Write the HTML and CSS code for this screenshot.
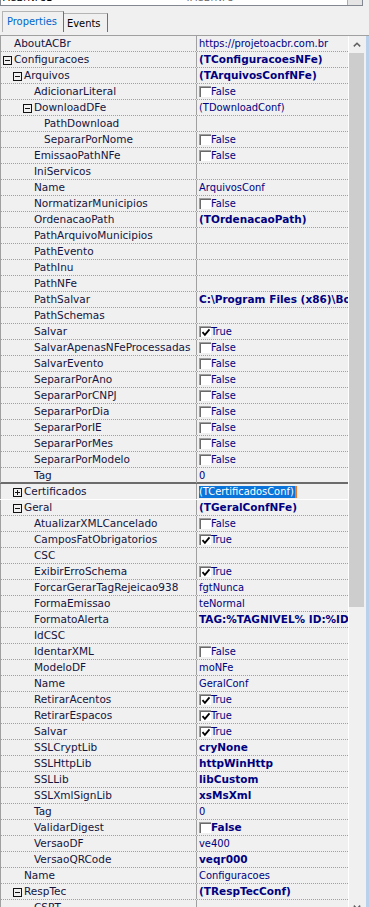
FILE: index.html
```html
<!DOCTYPE html>
<html lang="pt">
<head>
<meta charset="utf-8">
<title>Object Inspector</title>
<link rel="stylesheet" href="styles.css">
</head>
<body>
<div class="combo"><span class="c-name">ACBrNFe1</span><span class="c-type">TACBrNFe</span><span class="c-btn"></span></div>
<div class="tabs">
  <div class="tab active">Properties</div>
  <div class="tab ev">Events</div>
</div>
<div class="insp">
  <div class="grid">
    <div class="row"><div class="name l0"><span class="tw"></span>AboutACBr</div><div class="val">https://projetoacbr.com.br</div></div>
    <div class="row"><div class="name l0"><span class="tw"><svg class="tb" width="9" height="9" viewBox="0 0 9 9"><rect x=".5" y=".5" width="8" height="8" fill="none" stroke="#111"/><path d="M2 4.5h5" stroke="#111"/></svg></span>Configuracoes</div><div class="val b">(TConfiguracoesNFe)</div></div>
    <div class="row"><div class="name l1"><span class="tw"><svg class="tb" width="9" height="9" viewBox="0 0 9 9"><rect x=".5" y=".5" width="8" height="8" fill="none" stroke="#111"/><path d="M2 4.5h5" stroke="#111"/></svg></span>Arquivos</div><div class="val b">(TArquivosConfNFe)</div></div>
    <div class="row"><div class="name l2"><span class="tw"></span>AdicionarLiteral</div><div class="val"><span class="cb"></span>False</div></div>
    <div class="row"><div class="name l2"><span class="tw"><svg class="tb" width="9" height="9" viewBox="0 0 9 9"><rect x=".5" y=".5" width="8" height="8" fill="none" stroke="#111"/><path d="M2 4.5h5" stroke="#111"/></svg></span>DownloadDFe</div><div class="val">(TDownloadConf)</div></div>
    <div class="row"><div class="name l3"><span class="tw"></span>PathDownload</div><div class="val"></div></div>
    <div class="row"><div class="name l3"><span class="tw"></span>SepararPorNome</div><div class="val"><span class="cb"></span>False</div></div>
    <div class="row"><div class="name l2"><span class="tw"></span>EmissaoPathNFe</div><div class="val"><span class="cb"></span>False</div></div>
    <div class="row"><div class="name l2"><span class="tw"></span>IniServicos</div><div class="val"></div></div>
    <div class="row"><div class="name l2"><span class="tw"></span>Name</div><div class="val">ArquivosConf</div></div>
    <div class="row"><div class="name l2"><span class="tw"></span>NormatizarMunicipios</div><div class="val"><span class="cb"></span>False</div></div>
    <div class="row"><div class="name l2"><span class="tw"></span>OrdenacaoPath</div><div class="val b">(TOrdenacaoPath)</div></div>
    <div class="row"><div class="name l2"><span class="tw"></span>PathArquivoMunicipios</div><div class="val"></div></div>
    <div class="row"><div class="name l2"><span class="tw"></span>PathEvento</div><div class="val"></div></div>
    <div class="row"><div class="name l2"><span class="tw"></span>PathInu</div><div class="val"></div></div>
    <div class="row"><div class="name l2"><span class="tw"></span>PathNFe</div><div class="val"></div></div>
    <div class="row"><div class="name l2"><span class="tw"></span>PathSalvar</div><div class="val b">C:\Program Files (x86)\Borland</div></div>
    <div class="row"><div class="name l2"><span class="tw"></span>PathSchemas</div><div class="val"></div></div>
    <div class="row"><div class="name l2"><span class="tw"></span>Salvar</div><div class="val"><span class="cb"><svg width="10" height="9" viewBox="0 0 10 9"><path d="M1.5 4.2l2.4 2.6 4.6-5.4" fill="none" stroke="#000" stroke-width="1.8"/></svg></span>True</div></div>
    <div class="row"><div class="name l2"><span class="tw"></span>SalvarApenasNFeProcessadas</div><div class="val"><span class="cb"></span>False</div></div>
    <div class="row"><div class="name l2"><span class="tw"></span>SalvarEvento</div><div class="val"><span class="cb"></span>False</div></div>
    <div class="row"><div class="name l2"><span class="tw"></span>SepararPorAno</div><div class="val"><span class="cb"></span>False</div></div>
    <div class="row"><div class="name l2"><span class="tw"></span>SepararPorCNPJ</div><div class="val"><span class="cb"></span>False</div></div>
    <div class="row"><div class="name l2"><span class="tw"></span>SepararPorDia</div><div class="val"><span class="cb"></span>False</div></div>
    <div class="row"><div class="name l2"><span class="tw"></span>SepararPorIE</div><div class="val"><span class="cb"></span>False</div></div>
    <div class="row"><div class="name l2"><span class="tw"></span>SepararPorMes</div><div class="val"><span class="cb"></span>False</div></div>
    <div class="row"><div class="name l2"><span class="tw"></span>SepararPorModelo</div><div class="val"><span class="cb"></span>False</div></div>
    <div class="row"><div class="name l2"><span class="tw"></span>Tag</div><div class="val">0</div></div>
    <div class="row sel"><div class="name l1"><span class="tw"><svg class="tb" width="9" height="9" viewBox="0 0 9 9"><rect x=".5" y=".5" width="8" height="8" fill="none" stroke="#111"/><path d="M2 4.5h5M4.5 2v5" stroke="#111"/></svg></span>Certificados</div><div class="val"><span class="hl">(TCertificadosConf)</span></div></div>
    <div class="row"><div class="name l1"><span class="tw"><svg class="tb" width="9" height="9" viewBox="0 0 9 9"><rect x=".5" y=".5" width="8" height="8" fill="none" stroke="#111"/><path d="M2 4.5h5" stroke="#111"/></svg></span>Geral</div><div class="val b">(TGeralConfNFe)</div></div>
    <div class="row"><div class="name l2"><span class="tw"></span>AtualizarXMLCancelado</div><div class="val"><span class="cb"></span>False</div></div>
    <div class="row"><div class="name l2"><span class="tw"></span>CamposFatObrigatorios</div><div class="val"><span class="cb"><svg width="10" height="9" viewBox="0 0 10 9"><path d="M1.5 4.2l2.4 2.6 4.6-5.4" fill="none" stroke="#000" stroke-width="1.8"/></svg></span>True</div></div>
    <div class="row"><div class="name l2"><span class="tw"></span>CSC</div><div class="val"></div></div>
    <div class="row"><div class="name l2"><span class="tw"></span>ExibirErroSchema</div><div class="val"><span class="cb"><svg width="10" height="9" viewBox="0 0 10 9"><path d="M1.5 4.2l2.4 2.6 4.6-5.4" fill="none" stroke="#000" stroke-width="1.8"/></svg></span>True</div></div>
    <div class="row"><div class="name l2"><span class="tw"></span>ForcarGerarTagRejeicao938</div><div class="val">fgtNunca</div></div>
    <div class="row"><div class="name l2"><span class="tw"></span>FormaEmissao</div><div class="val">teNormal</div></div>
    <div class="row"><div class="name l2"><span class="tw"></span>FormatoAlerta</div><div class="val b">TAG:%TAGNIVEL% ID:%ID%</div></div>
    <div class="row"><div class="name l2"><span class="tw"></span>IdCSC</div><div class="val"></div></div>
    <div class="row"><div class="name l2"><span class="tw"></span>IdentarXML</div><div class="val"><span class="cb"></span>False</div></div>
    <div class="row"><div class="name l2"><span class="tw"></span>ModeloDF</div><div class="val">moNFe</div></div>
    <div class="row"><div class="name l2"><span class="tw"></span>Name</div><div class="val">GeralConf</div></div>
    <div class="row"><div class="name l2"><span class="tw"></span>RetirarAcentos</div><div class="val"><span class="cb"><svg width="10" height="9" viewBox="0 0 10 9"><path d="M1.5 4.2l2.4 2.6 4.6-5.4" fill="none" stroke="#000" stroke-width="1.8"/></svg></span>True</div></div>
    <div class="row"><div class="name l2"><span class="tw"></span>RetirarEspacos</div><div class="val"><span class="cb"><svg width="10" height="9" viewBox="0 0 10 9"><path d="M1.5 4.2l2.4 2.6 4.6-5.4" fill="none" stroke="#000" stroke-width="1.8"/></svg></span>True</div></div>
    <div class="row"><div class="name l2"><span class="tw"></span>Salvar</div><div class="val"><span class="cb"><svg width="10" height="9" viewBox="0 0 10 9"><path d="M1.5 4.2l2.4 2.6 4.6-5.4" fill="none" stroke="#000" stroke-width="1.8"/></svg></span>True</div></div>
    <div class="row"><div class="name l2"><span class="tw"></span>SSLCryptLib</div><div class="val b">cryNone</div></div>
    <div class="row"><div class="name l2"><span class="tw"></span>SSLHttpLib</div><div class="val b">httpWinHttp</div></div>
    <div class="row"><div class="name l2"><span class="tw"></span>SSLLib</div><div class="val b">libCustom</div></div>
    <div class="row"><div class="name l2"><span class="tw"></span>SSLXmlSignLib</div><div class="val b">xsMsXml</div></div>
    <div class="row"><div class="name l2"><span class="tw"></span>Tag</div><div class="val">0</div></div>
    <div class="row"><div class="name l2"><span class="tw"></span>ValidarDigest</div><div class="val b"><span class="cb"></span>False</div></div>
    <div class="row"><div class="name l2"><span class="tw"></span>VersaoDF</div><div class="val">ve400</div></div>
    <div class="row"><div class="name l2"><span class="tw"></span>VersaoQRCode</div><div class="val b">veqr000</div></div>
    <div class="row"><div class="name l1"><span class="tw"></span>Name</div><div class="val">Configuracoes</div></div>
    <div class="row"><div class="name l1"><span class="tw"><svg class="tb" width="9" height="9" viewBox="0 0 9 9"><rect x=".5" y=".5" width="8" height="8" fill="none" stroke="#111"/><path d="M2 4.5h5" stroke="#111"/></svg></span>RespTec</div><div class="val b">(TRespTecConf)</div></div>
    <div class="row"><div class="name l2"><span class="tw"></span>CSRT</div><div class="val"></div></div>
  </div>
  <div class="sep"></div>
  <div class="sb">
    <div class="sb-btn"><svg width="8" height="5" viewBox="0 0 8 5"><path d="M.8 4.4L4 1.2l3.2 3.2" fill="none" stroke="#606060" stroke-width="1.5"/></svg></div>
    <div class="sb-thumb"></div>
    <div class="sb-track"></div>
    <div class="sb-btn"><svg width="8" height="5" viewBox="0 0 8 5"><path d="M.8 .6L4 3.8l3.2-3.2" fill="none" stroke="#606060" stroke-width="1.5"/></svg></div>
  </div>
  <div class="gap"></div>
  <div class="edge"></div>
</div>
</body>
</html>
```
FILE: styles.css
```css
* { box-sizing: border-box; }
html, body { height: 907px; overflow: hidden; }
body {
  margin: 0;
  background: #f0f0f0;
  font-family: "DejaVu Sans Condensed", "DejaVu Sans", sans-serif;
  font-size: 11px;
  color: #000;
}

/* top component combo (clipped at the top edge) */
.combo {
  display: flex;
  height: 17px;
  margin: -11px 6px 0 0;
  background: #fff;
  border: 1px solid #828790;
  line-height: 15px;
}
.c-name { width: 184px; padding-left: 2px; color: #000; }
.c-type { flex: 1; color: #6d6d6d; }
.c-btn { width: 15px; background: #e5e5e5; border-left: 1px solid #adadad; }

/* tabs */
.tabs {
  display: flex;
  align-items: flex-end;
  height: 26px;
  padding-left: 2px;
  margin-bottom: 3px;
}
.tab {
  border: 1px solid #b4b4b4;
  border-bottom: none;
  border-right-color: #6f6f6f;
  line-height: 13px;
  padding-top: 3px;
}
.tab.active { width: 62px; height: 21px; padding-left: 4px; color: #0066cc; }
.tab.ev { width: 44px; height: 19px; padding-left: 3px; color: #000; border-left: none; }

/* inspector grid */
.insp {
  display: flex;
  border-top: 1px solid #a0a0a0;
}
.grid { width: 348px; flex: none; }
.row {
  display: flex;
  height: 16px;
  border-bottom: 1px dotted #a0a0a0;
  line-height: 15px;
  white-space: nowrap;
}
.row.sel {
  height: 18px;
  margin-top: -2px;
  border-top: 2px solid #6b6b6b;
  border-bottom: 1px solid #fff;
}
.name {
  width: 197px;
  flex: none;
  display: flex;
  align-items: center;
  border-left: 1px solid #a0a0a0;
  border-right: 1px solid #a0a0a0;
  overflow: hidden;
  font-family: "DejaVu Sans", sans-serif;
  font-size: 10.5px;
  color: #141440;
}
.l0 { padding-left: 2px; }
.l1 { padding-left: 12px; }
.l2 { padding-left: 22px; }
.l3 { padding-left: 32px; }
.tw { width: 11px; flex: none; display: flex; align-items: center; height: 15px; }
.tb { display: block; margin-top: 2px; }
.val {
  flex: 1;
  min-width: 0;
  display: flex;
  align-items: center;
  padding-left: 2px;
  overflow: hidden;
  color: #000080;
}
.val.b {
  font-family: "DejaVu Sans", sans-serif;
  font-size: 10.5px;
  font-weight: bold;
}
.cb {
  width: 12px;
  height: 11px;
  flex: none;
  background: #fff;
  border-top: 1px solid #a0a0a0;
  border-left: 1px solid #a0a0a0;
  box-shadow: inset 1px 1px 0 #6a6a6a;
  display: flex;
  align-items: center;
  justify-content: center;
}
.cb svg { display: block; }
.hl {
  background: #0a74da;
  color: #fff;
  line-height: 12px;
  padding-right: 1px;
  border-right: 2px solid #f07a28;
}

/* scrollbar */
.sep { width: 1px; background: #fff; }
.sb { width: 15px; display: flex; flex-direction: column; }
.sb-btn { height: 17px; flex: none; display: flex; align-items: center; justify-content: center; }
.sb-thumb { height: 554px; flex: none; background: #cdcdcd; }
.sb-track { flex: 1; }
.gap { width: 2px; }
.edge { flex: 1; background: #b9d1ea; }
```
